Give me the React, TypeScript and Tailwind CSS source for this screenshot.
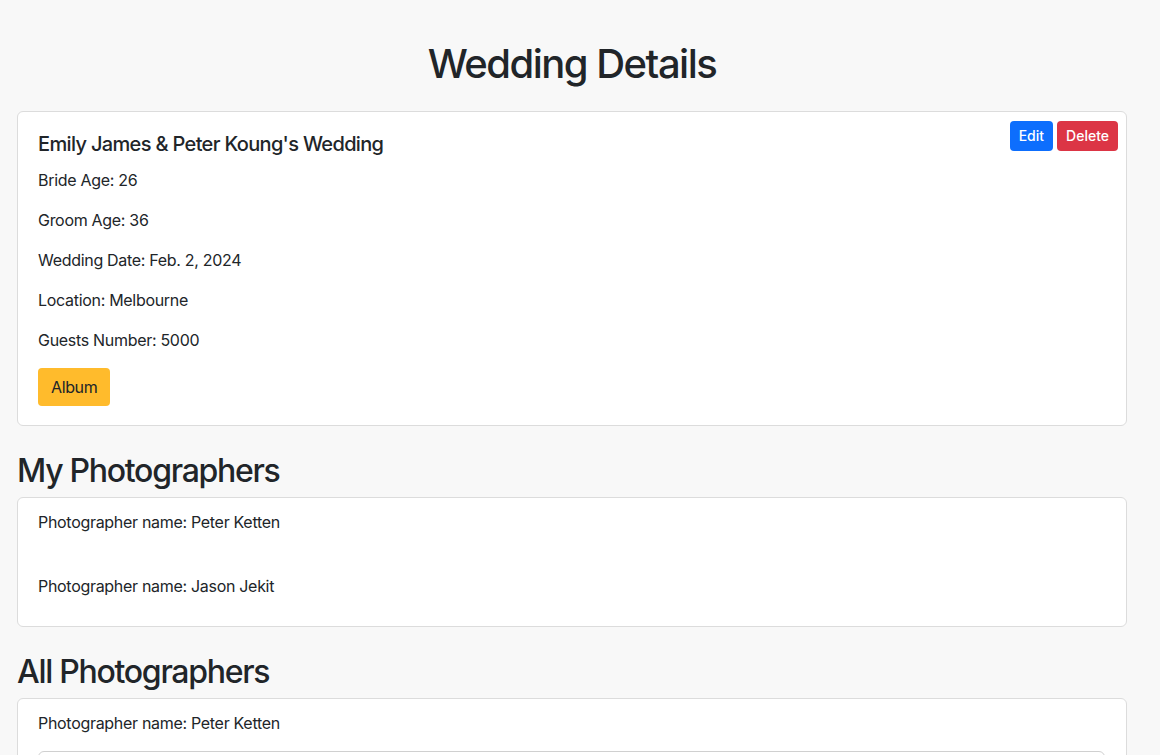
import React from "react";

export default function App() {
  const font = { fontFamily: "Inter, 'Noto Sans', sans-serif" };
  const p = "text-[16px] leading-[24px] mb-[16px] tracking-[-0.019em]";
  return (
    <div className="min-h-[755px] bg-[#f8f8f8] text-[#212529]" style={font}>
      <div className="mx-[17px] w-[1110px] pt-[40px]">
        <h1 className="text-center text-[40px] font-medium leading-[48px] mb-[23px] tracking-[-0.038em]">Wedding Details</h1>

        <div className="relative rounded-[6px] border border-[#dcdcdc] bg-white px-[20px] pt-[20px] pb-[19px]">
          <div className="absolute right-[8px] top-[9px] flex gap-[4px]">
            <button className="rounded-[4px] bg-[#0d6efd] px-[9px] py-[4px] text-[14px] leading-[22px] font-medium text-white">Edit</button>
            <button className="rounded-[4px] bg-[#dc3545] px-[9px] py-[4px] text-[14px] leading-[22px] font-medium text-white">Delete</button>
          </div>
          <h5 className="text-[20px] font-medium leading-[24px] mb-[12px] tracking-[-0.033em]">Emily James &amp; Peter Koung's Wedding</h5>
          <p className={p}>Bride Age: 26</p>
          <p className={p}>Groom Age: 36</p>
          <p className={p}>Wedding Date: Feb. 2, 2024</p>
          <p className={p}>Location: Melbourne</p>
          <p className={p}>Guests Number: 5000</p>
          <button className="rounded-[4px] bg-[#ffbb2c] px-[13px] py-[7px] text-[16px] leading-[24px] tracking-[-0.024em] text-[#212529]">Album</button>
        </div>

        <h2 className="mt-[26px] mb-[7px] text-[32px] font-medium leading-[38px] tracking-[-0.04em]">My Photographers</h2>
        <div className="rounded-[6px] border border-[#dcdcdc] bg-white px-[20px] pt-[12px] pb-[12px]">
          <p className={p}>Photographer name: Peter Ketten</p>
          <div className="h-[24px]" />
          <p className={p}>Photographer name: Jason Jekit</p>
        </div>

        <h2 className="mt-[26px] mb-[7px] text-[32px] font-medium leading-[38px] tracking-[-0.04em]">All Photographers</h2>
        <div className="rounded-[6px] border border-[#dcdcdc] bg-white px-[20px] pt-[12px] pb-[12px]">
          <p className={p}>Photographer name: Peter Ketten</p>
          <div className="h-[38px] w-[1067px] rounded-[6px] border border-[#d0d0d0] bg-white" />
          <div className="h-[40px]" />
        </div>
      </div>
    </div>
  );
}
